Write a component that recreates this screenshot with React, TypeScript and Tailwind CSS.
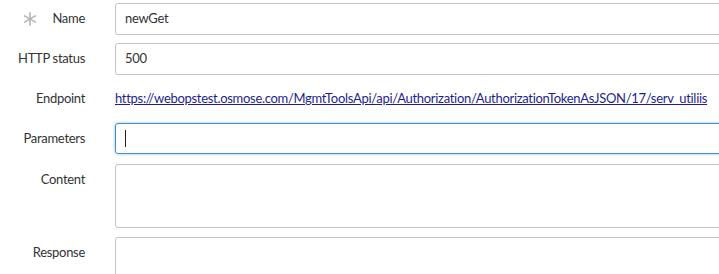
import type { ReactNode } from "react";

function Label({ children, required }: { children: ReactNode; required?: boolean }) {
  return (
    <div className="w-[85px] shrink-0 flex items-center justify-end gap-[15px] text-[13px] text-[#333]">
      {required && (
        <svg width="14" height="14" viewBox="0 0 14 14" className="shrink-0">
          <g stroke="#b5b5b5" strokeWidth="1.6" strokeLinecap="round">
            <line x1="7" y1="0.8" x2="7" y2="13.2" />
            <line x1="1.6" y1="3.9" x2="12.4" y2="10.1" />
            <line x1="1.6" y1="10.1" x2="12.4" y2="3.9" />
          </g>
        </svg>
      )}
      <span>{children}</span>
    </div>
  );
}

export default function App() {
  const font = { fontFamily: '"Lato", "Open Sans", sans-serif' };

  return (
    <div className="w-[719px] h-[274px] overflow-hidden bg-white pt-[3px] tracking-[-0.3px]" style={font}>
      <div className="flex flex-col gap-[8px]">
        <div className="flex items-center gap-[30px]">
          <Label required>Name</Label>
          <div className="w-[620px] h-[32px] shrink-0 border border-[#c4c4c4] rounded-[3px] px-[9px] flex items-center text-[13px] text-[#333]">
            newGet
          </div>
        </div>
        <div className="flex items-center gap-[30px]">
          <Label>HTTP status</Label>
          <div className="w-[620px] h-[32px] shrink-0 border border-[#c4c4c4] rounded-[3px] px-[9px] flex items-center text-[13px] text-[#333]">
            500
          </div>
        </div>
        <div className="flex items-center gap-[30px] h-[32px]">
          <Label>Endpoint</Label>
          <a
            href="#"
            className="text-[13px] text-[#1e1e8e] underline whitespace-nowrap"
          >
            https://webopstest.osmose.com/MgmtToolsApi/api/Authorization/AuthorizationTokenAsJSON/17/serv_utiliis
          </a>
        </div>
        <div className="flex items-center gap-[30px]">
          <Label>Parameters</Label>
          <div className="w-[620px] h-[31px] shrink-0 border border-[#3d8fcf] rounded-[3px] px-[9px] flex items-center shadow-[0_0_3px_rgba(61,143,207,0.6)]">
            <span className="w-px h-[17px] bg-[#222]" />
          </div>
        </div>
        <div className="flex items-start gap-[30px] pt-[2px]">
          <div className="pt-[6px]">
            <Label>Content</Label>
          </div>
          <div className="w-[620px] h-[64px] shrink-0 border border-[#c4c4c4] rounded-[3px]" />
        </div>
        <div className="flex items-start gap-[30px] pt-[1px]">
          <div className="pt-[6px]">
            <Label>Response</Label>
          </div>
          <div className="w-[620px] h-[64px] shrink-0 border border-[#c4c4c4] rounded-[3px]" />
        </div>
      </div>
    </div>
  );
}
